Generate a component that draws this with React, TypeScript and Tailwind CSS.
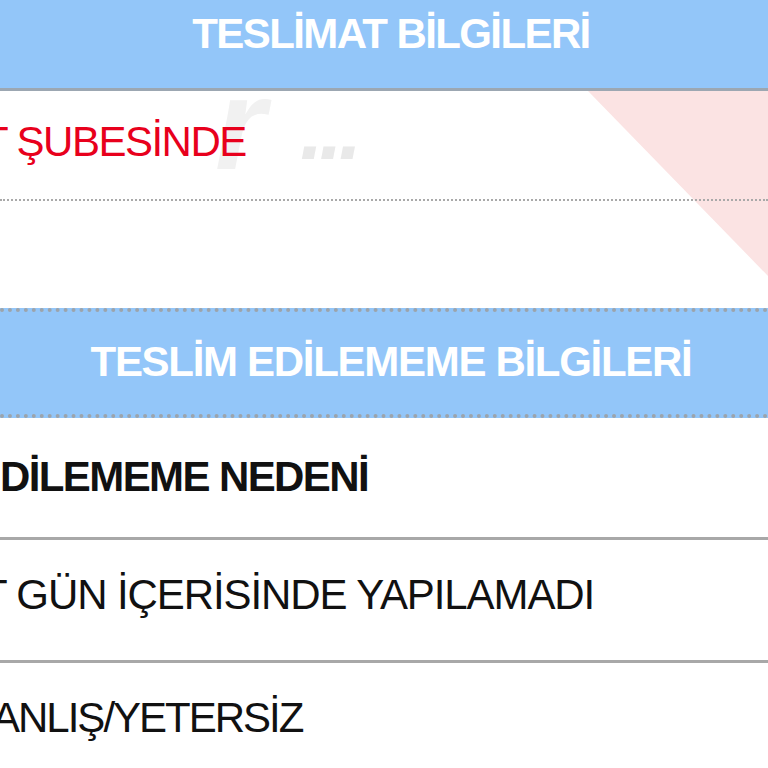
import React from "react";

const font = { fontFamily: '"Liberation Sans", Arial, sans-serif' };

export default function App() {
  return (
    <div className="w-[768px] h-[768px] overflow-hidden bg-white" style={font}>
      {/* Header 1 */}
      <div className="h-[91px] bg-[#93c6f9] border-b-[3px] border-[#9ca7b2] pl-[14px] pt-[13px] flex justify-center">
        <span className="text-[42px] leading-[42px] font-bold text-white tracking-[-1.6px]">
          TESLİMAT BİLGİLERİ
        </span>
      </div>

      {/* Delivery info section */}
      <div className="relative">
        <svg className="absolute inset-0 w-[768px] h-[217px]" viewBox="0 0 768 217">
          <polygon points="588,0 768,0 768,185" fill="#fbe3e3" />
          <text
            x="215"
            y="78"
            fontFamily="Liberation Sans, Arial, sans-serif"
            fontStyle="italic"
            fontWeight="bold"
            fontSize="130"
            fill="#f1f1f1"
          >
            r
          </text>
          <text
            x="300"
            y="68"
            fontFamily="Liberation Sans, Arial, sans-serif"
            fontStyle="italic"
            fontWeight="bold"
            fontSize="84"
            fill="#e9e9e9"
            letterSpacing="-4"
          >
            ...
          </text>
        </svg>
        <div className="relative h-[110px] border-b-2 border-dotted border-[#a9a9a9] pt-[30px] overflow-hidden">
          <span className="block whitespace-nowrap ml-[-17px] text-[42px] leading-[42px] text-[#e8001c] tracking-[-1.5px]">
            T ŞUBESİNDE
          </span>
        </div>
        <div className="relative h-[107px]" />
      </div>

      {/* Header 2 */}
      <div className="h-[110px] bg-[#93c6f9] border-y-4 border-dotted border-[#9ca4ac] pl-[14px] pt-[29px] flex justify-center">
        <span className="text-[42px] leading-[42px] font-bold text-white tracking-[-1.3px] whitespace-nowrap">
          TESLİM EDİLEMEME BİLGİLERİ
        </span>
      </div>

      {/* Rows */}
      <div className="h-[122px] border-b-[3px] border-[#a8a8a8] pt-[38px] overflow-hidden">
        <span className="block whitespace-nowrap text-[42px] leading-[42px] font-bold text-[#111] tracking-[-1.6px]">
          DİLEMEME NEDENİ
        </span>
      </div>
      <div className="h-[123px] border-b-[3px] border-[#a8a8a8] pt-[34px] overflow-hidden">
        <span className="block whitespace-nowrap ml-[-18px] text-[42px] leading-[42px] text-[#111] tracking-[-1.1px]">
          T GÜN İÇERİSİNDE YAPILAMADI
        </span>
      </div>
      <div className="h-[123px] pt-[34px] overflow-hidden">
        <span className="block whitespace-nowrap ml-[-8px] text-[42px] leading-[42px] text-[#111] tracking-[-2px]">
          ANLIŞ/YETERSİZ
        </span>
      </div>
    </div>
  );
}
